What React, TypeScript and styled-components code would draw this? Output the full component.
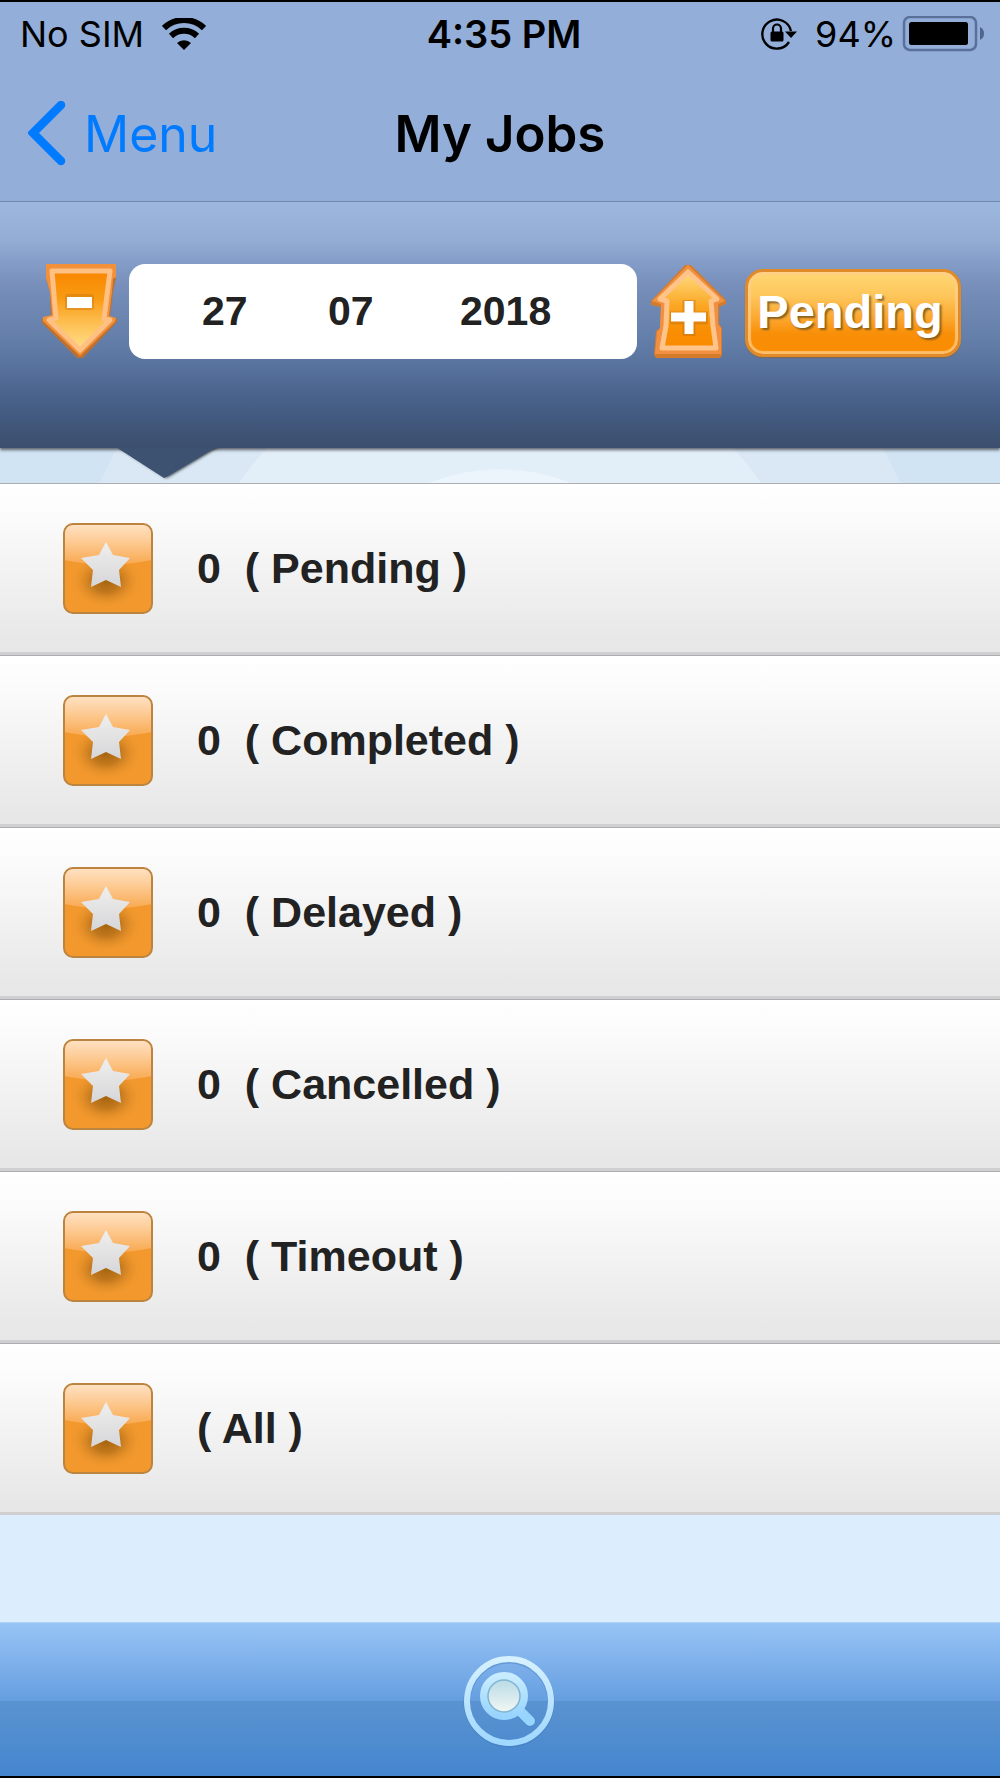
import React from "react";
import styled, { createGlobalStyle } from "styled-components";

const GlobalStyle = createGlobalStyle`
  *, *::before, *::after { box-sizing: border-box; }
  body { margin: 0; background: #dceefd; }
`;

const uiFont = `Inter, "Liberation Sans", sans-serif`;
const bodyFont = `"Liberation Sans", Arial, sans-serif`;

const Screen = styled.div`
  display: flex;
  flex-direction: column;
  min-height: 100vh;
  border-top: 2px solid #000;
  border-bottom: 2px solid #000;
  background: #dceefd;
  color: #222;
  font-family: ${bodyFont};
`;

const TopBar = styled.header`
  background: #93aed8;
  border-bottom: 1px solid #748cb4;
  font-family: ${uiFont};
  color: #000;
`;

const StatusBar = styled.div`
  display: grid;
  grid-template-columns: 1fr auto 1fr;
  align-items: center;
  height: 64px;
  padding: 0 12px 0 20px;
  font-size: 36px;
  line-height: 44px;
`;

const StatusGroup = styled.div<{ $end?: boolean }>`
  display: flex;
  align-items: center;
  justify-content: ${(p) => (p.$end ? "flex-end" : "flex-start")};
  gap: ${(p) => (p.$end ? 6 : 18)}px;
`;

const Percent = styled.span`
  margin-left: 12px;
`;

const Clock = styled.time`
  font-size: 38px;
  font-weight: 600;
`;

const NavBar = styled.nav`
  display: grid;
  grid-template-columns: 1fr auto 1fr;
  align-items: center;
  height: 135px;
  padding: 0 28px;
`;

const BackLink = styled.a`
  display: flex;
  align-items: center;
  gap: 14px;
  color: #007aff;
  font-size: 50px;
  line-height: 60px;
  text-decoration: none;
`;

const Title = styled.h1`
  margin: 0;
  font-size: 51px;
  line-height: 60px;
  font-weight: 600;
`;

const FilterPanel = styled.form`
  position: relative;
  display: flex;
  align-items: flex-start;
  gap: 12px;
  padding: 62px 39px 88px 37px;
  background: linear-gradient(
    #9db8df 0%,
    #93acd3 16%,
    #8099c5 27%,
    #7890bb 33%,
    #5f7ba5 60%,
    #4b658f 77%,
    #42597f 88%,
    #3c4e6c 100%
  );
  box-shadow: 0 2px 3px rgba(40, 40, 50, 0.7);
`;

const Pointer = styled.svg`
  position: absolute;
  left: 112px;
  top: 100%;
`;

const IconButton = styled.button`
  flex: none;
  width: 80px;
  height: 96px;
  padding: 0;
  border: 0;
  background: none;
  cursor: pointer;
  svg { display: block; }
`;

const DateBox = styled.fieldset`
  flex: 1;
  min-width: 0;
  display: grid;
  grid-template-columns: 126px 132px 1fr;
  align-items: center;
  height: 95px;
  margin: 0;
  padding: 0 16px 2px 73px;
  border: 0;
  border-radius: 16px;
  background: #fff;
`;

const DateInput = styled.input`
  width: 100%;
  min-width: 0;
  padding: 0;
  border: 0;
  outline: 0;
  background: transparent;
  color: #222;
  font: bold 41px/48px ${bodyFont};
`;

const PendingButton = styled.button`
  flex: none;
  width: 216px;
  height: 88px;
  margin: 5px 0 0 4px;
  padding: 0 6px 2px 0;
  border: 3px solid #e08a2a;
  border-radius: 18px;
  background: linear-gradient(#ffd873, #fdc55a 30%, #fba62c 58%, #f98f08 75%, #f98c00);
  box-shadow: inset 0 0 1px 3px rgba(255, 206, 140, 0.75), 0 1px 1px rgba(150, 90, 30, 0.6);
  color: #fff;
  font: bold 47px/56px ${bodyFont};
  text-shadow: 2px 2px 2px rgba(110, 80, 30, 0.8);
  cursor: pointer;
`;

const Backdrop = styled.div`
  height: 35px;
  background: radial-gradient(
    circle at 50% 214px,
    #edf5fc 192px,
    #e3eff8 193px,
    #e3eff8 316px,
    #d9e8f4 317px,
    #d9e8f4 438px,
    #d1e4f3 439px
  );
`;

const JobList = styled.ul`
  margin: 0;
  padding: 0;
  list-style: none;
`;

const JobRow = styled.li`
  border-top: 1px solid #abaeb3;
  border-bottom: 3px solid #cfcfcf;
  background: linear-gradient(#fff, #fbfbfb 20%, #e7e7e7 95%);
`;

const JobLink = styled.a`
  display: flex;
  align-items: center;
  gap: 44px;
  height: 168px;
  padding: 0 63px;
  color: #222;
  font-size: 43px;
  line-height: 50px;
  font-weight: bold;
  text-decoration: none;
  white-space: pre;
`;

const Footer = styled.footer`
  display: flex;
  justify-content: center;
  margin-top: auto;
  padding: 30px 0 27px 18px;
  border-top: 1px solid #b0d0f3;
  background: linear-gradient(#98c4f6, #659ee0 51%, #5a93d0 51%, #4586cf);
`;

const SearchButton = styled.button`
  padding: 0;
  border: 0;
  background: none;
  cursor: pointer;
  svg { display: block; }
`;

const WifiIcon = () => (
  <svg width="44" height="32" viewBox="0 0 44 32" aria-hidden="true">
    <g fill="none" stroke="#000" strokeWidth="6">
      <path d="M2 10 A29 29 0 0 1 42 10" />
      <path d="M9 18 A19 19 0 0 1 35 18" />
    </g>
    <path d="M15 25 A10 10 0 0 1 29 25 L22 32 Z" />
  </svg>
);

const RotationLockIcon = () => (
  <svg width="36" height="34" viewBox="0 0 36 34" aria-hidden="true">
    <path d="M28 25 A14.500 14.500 0 1 1 30 14" fill="none" stroke="#000" strokeWidth="2.400" />
    <path d="M24 14.500 H36 L30 21 Z" />
    <rect x="9.500" y="14.500" width="13" height="10" rx="1.500" />
    <path d="M12 15 V11.500 a4 4 0 0 1 8 0 V15" fill="none" stroke="#000" strokeWidth="2.200" />
  </svg>
);

const BatteryIcon = () => (
  <svg width="86" height="36" viewBox="0 0 86 36" aria-hidden="true">
    <rect x="2" y="1" width="72" height="33" rx="6" fill="none" stroke="#58709a" strokeWidth="2.500" />
    <rect x="7" y="6" width="59" height="23" rx="2.500" />
    <path d="M78 11 q4 2 4 6.500 t-4 6.500 Z" fill="#4f658c" />
  </svg>
);

const ChevronIcon = () => (
  <svg width="42" height="66" viewBox="0 0 42 66" aria-hidden="true">
    <path d="M33 4 L5 32 L33 60" fill="none" stroke="#007aff" strokeWidth="8.500" strokeLinecap="round" />
  </svg>
);

const MinusArrowIcon = () => (
  <svg width="80" height="96" viewBox="0 0 80 96" aria-hidden="true">
    <defs>
      <linearGradient id="minusFill" x1="0" y1="0" x2="0" y2="1">
        <stop offset="0" stopColor="#f98600" />
        <stop offset="0.350" stopColor="#f99b14" />
        <stop offset="0.650" stopColor="#fdbe50" />
        <stop offset="1" stopColor="#ffe08a" />
      </linearGradient>
    </defs>
    <path d="M9 2 H79 V14 L76 28 L73 53 L80 54 V58 L46 94 H40 L5 59 V55 L14 53 L13 28 L9 15 Z" fill="#bd7030" />
    <path d="M9 0 H79 V13 L76 15 L75 28 L72 52 L79 54 L78 58 L43 92 L6 57 V53 L15 51 L13 28 L9 14 Z" fill="#f3913a" />
    <path
      d="M15 7 H73 L67 55 L73 56 L43 86 L12 56 L19 54 Z"
      fill="url(#minusFill)"
      stroke="#ffc084"
      strokeWidth="5"
      strokeLinejoin="round"
    />
    <rect x="28" y="30" width="29" height="16" rx="3" fill="#c87410" opacity="0.400" />
    <rect x="30" y="33" width="25" height="11" fill="#fff" />
  </svg>
);

const PlusArrowIcon = () => (
  <svg width="80" height="96" viewBox="0 0 80 96" aria-hidden="true">
    <defs>
      <linearGradient id="plusFill" x1="0" y1="0" x2="0" y2="1">
        <stop offset="0" stopColor="#ffdc80" />
        <stop offset="0.450" stopColor="#fba622" />
        <stop offset="0.750" stopColor="#f98f04" />
        <stop offset="1" stopColor="#f98a00" />
      </linearGradient>
    </defs>
    <path d="M36 1 H42 L77 36 V40 L70 43 V60 L73 64 V91 L71 94 H7 L5 91 L7 67 L11 64 L12 43 L2 41 V37 Z" fill="#d57c2b" />
    <path d="M39 1 L76 37 L69 40 V60 L72 64 V90 H6 L8 68 L11 64 L12 40 L3 37 Z" fill="#f09040" />
    <path
      d="M39 8 L68 35 L62 37 L64 62 L67 84 H13 L17 62 L18 37 L11 35 Z"
      fill="url(#plusFill)"
      stroke="#ffc48a"
      strokeWidth="5"
      strokeLinejoin="round"
    />
    <path d="M40 36 V72 M21 54 H59" stroke="#bd6810" opacity="0.400" strokeWidth="13" />
    <path d="M40 37 V70 M22 53 H57" stroke="#fff" strokeWidth="9" />
  </svg>
);

const PanelPointer = () => (
  <Pointer width="120" height="35" viewBox="0 0 120 35" aria-hidden="true">
    <defs>
      <filter id="pointerShadow" x="-10%" y="-10%" width="120%" height="130%">
        <feDropShadow dx="2" dy="0" stdDeviation="1.500" floodColor="#22262e" floodOpacity="0.900" />
      </filter>
    </defs>
    <path d="M3 -3 L7 1 L52 30 L56 28 L103 0 L107 -3 Z" fill="#3c5170" filter="url(#pointerShadow)" />
  </Pointer>
);

const StarIcon = ({ id }: { id: string }) => (
  <svg width="90" height="91" viewBox="0 0 90 91" aria-hidden="true">
    <defs>
      <linearGradient id={`${id}Gloss`} x1="0" y1="0" x2="0" y2="1">
        <stop offset="0" stopColor="#ffe2c4" />
        <stop offset="0.500" stopColor="#fdc78c" />
        <stop offset="1" stopColor="#f8a850" />
      </linearGradient>
      <linearGradient id={`${id}Star`} x1="0" y1="0" x2="0" y2="1">
        <stop offset="0" stopColor="#efefef" />
        <stop offset="1" stopColor="#d6d6d8" />
      </linearGradient>
      <radialGradient id={`${id}Shade`}>
        <stop offset="0" stopColor="#a5640e" />
        <stop offset="0.400" stopColor="#b8721a" stopOpacity="0.850" />
        <stop offset="1" stopColor="#f2982d" stopOpacity="0" />
      </radialGradient>
    </defs>
    <rect x="1" y="1" width="88" height="89" rx="9" fill="#f2982d" />
    <ellipse cx="43" cy="58" rx="36" ry="28" fill={`url(#${id}Shade)`} />
    <path d="M1 10 Q1 1 10 1 H80 Q89 1 89 10 V37 Q45 46 1 37 Z" fill={`url(#${id}Gloss)`} />
    <path
      d="M43 19 L50 32 L67 35 L56 47 L58 64 L43 57 L28 64 L30 47 L18 35 L36 32 Z"
      fill={`url(#${id}Star)`}
      strokeLinejoin="round"
    />
    <rect x="1" y="1" width="88" height="89" rx="9" fill="none" stroke="#bd8440" strokeWidth="2" />
  </svg>
);

const SearchIcon = () => (
  <svg width="96" height="96" viewBox="0 0 96 96" aria-hidden="true">
    <defs>
      <linearGradient id="ringFill" x1="0" y1="0" x2="0" y2="1">
        <stop offset="0" stopColor="#d6f1ff" />
        <stop offset="1" stopColor="#a0d8fe" />
      </linearGradient>
      <linearGradient id="glassFill" x1="0" y1="0" x2="0" y2="1">
        <stop offset="0" stopColor="#c8ecff" />
        <stop offset="1" stopColor="#98d4fe" />
      </linearGradient>
      <linearGradient id="lensFill" x1="0" y1="0" x2="0" y2="1">
        <stop offset="0" stopColor="#b9dbe6" />
        <stop offset="1" stopColor="#f1f7f4" />
      </linearGradient>
    </defs>
    <circle cx="48" cy="49" r="42" fill="none" stroke="#3f78b9" strokeWidth="7" opacity="0.400" />
    <circle cx="48" cy="48" r="42" fill="none" stroke="url(#ringFill)" strokeWidth="6" />
    <path d="M58 57 L69 68" stroke="#3f78b9" strokeWidth="12" strokeLinecap="round" opacity="0.300" />
    <path d="M57 56 L69 68" stroke="#98d5fe" strokeWidth="10" strokeLinecap="round" />
    <circle cx="43" cy="43" r="20" fill="none" stroke="url(#glassFill)" strokeWidth="8" />
    <circle cx="43" cy="43" r="16" fill="url(#lensFill)" stroke="#7fb6d0" strokeWidth="1.500" />
  </svg>
);

const jobs = [
  { id: "pending", label: "0  ( Pending )" },
  { id: "completed", label: "0  ( Completed )" },
  { id: "delayed", label: "0  ( Delayed )" },
  { id: "cancelled", label: "0  ( Cancelled )" },
  { id: "timeout", label: "0  ( Timeout )" },
  { id: "all", label: "( All )" },
];

export default function App() {
  return (
    <>
      <GlobalStyle />
      <Screen>
        <TopBar>
          <StatusBar>
            <StatusGroup>
              <span>No SIM</span>
              <WifiIcon />
            </StatusGroup>
            <Clock>4:35 PM</Clock>
            <StatusGroup $end>
              <RotationLockIcon />
              <Percent>94%</Percent>
              <BatteryIcon />
            </StatusGroup>
          </StatusBar>
          <NavBar>
            <BackLink href="#menu">
              <ChevronIcon />
              Menu
            </BackLink>
            <Title>My Jobs</Title>
          </NavBar>
        </TopBar>
        <FilterPanel onSubmit={(e) => e.preventDefault()}>
          <IconButton type="button" aria-label="Previous day">
            <MinusArrowIcon />
          </IconButton>
          <DateBox aria-label="Date">
            <DateInput aria-label="Day" inputMode="numeric" defaultValue="27" />
            <DateInput aria-label="Month" inputMode="numeric" defaultValue="07" />
            <DateInput aria-label="Year" inputMode="numeric" defaultValue="2018" />
          </DateBox>
          <IconButton type="button" aria-label="Next day">
            <PlusArrowIcon />
          </IconButton>
          <PendingButton type="submit">Pending</PendingButton>
          <PanelPointer />
        </FilterPanel>
        <main>
          <Backdrop />
          <JobList>
            {jobs.map((job) => (
              <JobRow key={job.id}>
                <JobLink href={`#${job.id}`}>
                  <StarIcon id={job.id} />
                  {job.label}
                </JobLink>
              </JobRow>
            ))}
          </JobList>
        </main>
        <Footer>
          <SearchButton type="button" aria-label="Search">
            <SearchIcon />
          </SearchButton>
        </Footer>
      </Screen>
    </>
  );
}
